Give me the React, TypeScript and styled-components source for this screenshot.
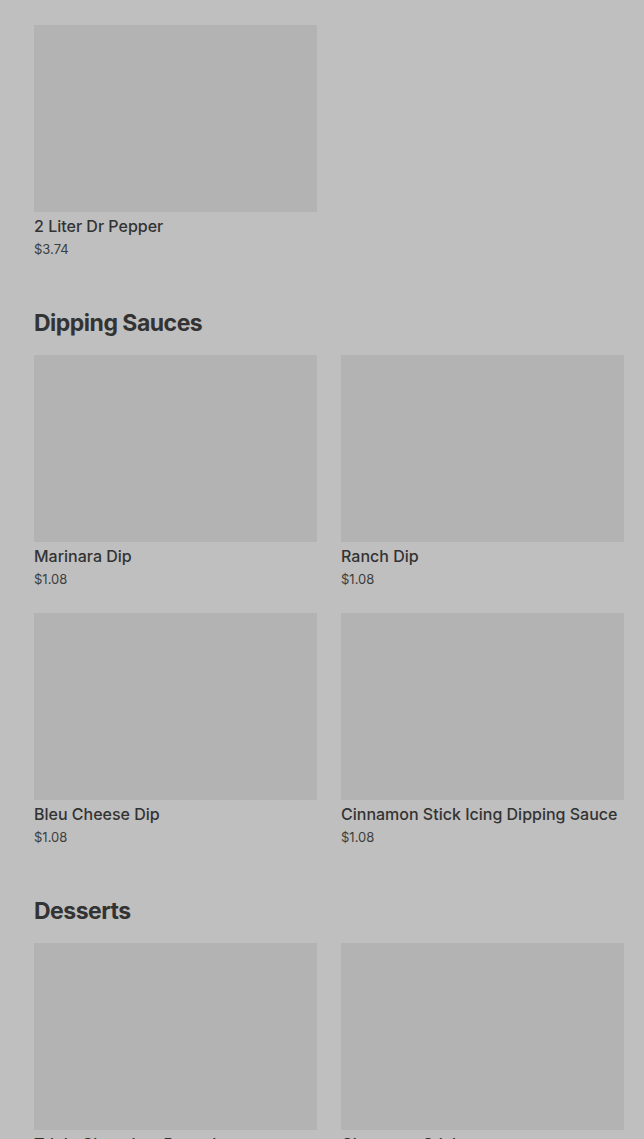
import React from 'react';
import styled, { createGlobalStyle } from 'styled-components';

const GlobalStyle = createGlobalStyle`
  html, body {
    margin: 0;
    padding: 0;
    background-color: #bfbfbf;
    overflow: hidden;
  }
  body {
    font-family: Inter, "Noto Sans", Arial, sans-serif;
  }
`;

const Page = styled.div`
  width: 644px;
  height: 1139px;
  overflow: hidden;
  background-color: #bfbfbf;
`;

const Menu = styled.div`
  padding: 0 20px 0 34px;
  margin-top: -233px;
`;

const Section = styled.section`
  & + & {
    margin-top: 48px;
  }
`;

const SectionTitle = styled.h2`
  margin: 0 0 16px;
  font-size: 23px;
  line-height: 32px;
  font-weight: 700;
  letter-spacing: -0.5px;
  color: #333333;
`;

const Grid = styled.div`
  display: grid;
  grid-template-columns: 283px 283px;
  column-gap: 24px;
  row-gap: 24px;
`;

const Card = styled.div`
  display: flex;
  flex-direction: column;
`;

const Thumb = styled.div`
  height: 187px;
  background-color: #b3b3b3;
`;

const Name = styled.div`
  margin-top: 4px;
  font-size: 16px;
  line-height: 20px;
  font-weight: 500;
  color: #333333;
  white-space: nowrap;
`;

const Price = styled.div`
  margin-top: 3px;
  font-size: 13px;
  line-height: 20px;
  color: #3d3d3d;
`;

type Item = { name: string; price: string };

const sections: { title?: string; items: Item[] }[] = [
  {
    items: [
      { name: '20oz Coke', price: '$2.15' },
      { name: '20oz Sprite', price: '$2.15' },
      { name: '2 Liter Dr Pepper', price: '$3.74' },
    ],
  },
  {
    title: 'Dipping Sauces',
    items: [
      { name: 'Marinara Dip', price: '$1.08' },
      { name: 'Ranch Dip', price: '$1.08' },
      { name: 'Bleu Cheese Dip', price: '$1.08' },
      { name: 'Cinnamon Stick Icing Dipping Sauce', price: '$1.08' },
    ],
  },
  {
    title: 'Desserts',
    items: [
      { name: 'Triple Chocolate Brownie', price: '$6.49' },
      { name: 'Cinnamon Sticks', price: '$5.99' },
    ],
  },
];

const App: React.FC = () => {
  return (
    <Page>
      <GlobalStyle />
      <Menu>
        {sections.map((section, i) => (
          <Section key={i}>
            {section.title && <SectionTitle>{section.title}</SectionTitle>}
            <Grid>
              {section.items.map((item) => (
                <Card key={item.name}>
                  <Thumb />
                  <Name>{item.name}</Name>
                  <Price>{item.price}</Price>
                </Card>
              ))}
            </Grid>
          </Section>
        ))}
      </Menu>
    </Page>
  );
};

export default App;
